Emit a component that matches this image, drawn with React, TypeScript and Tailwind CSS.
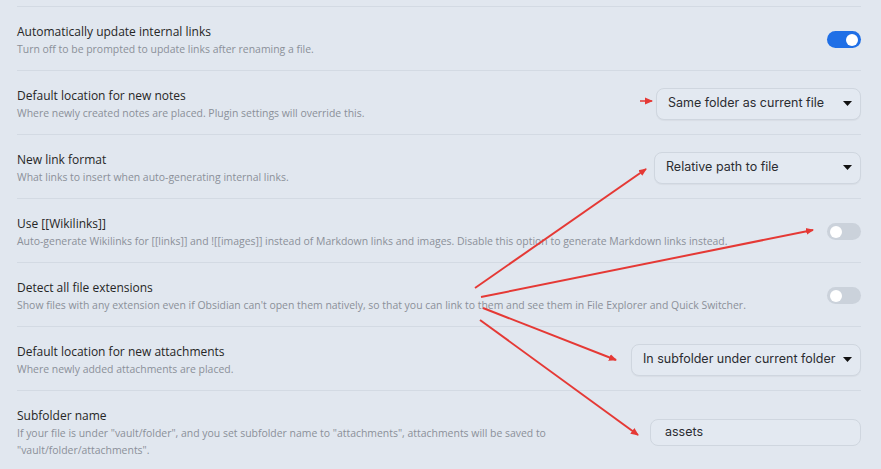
import React from "react"

type Control =
  | { kind: "toggle"; on: boolean }
  | { kind: "select"; value: string; width: string }
  | { kind: "input"; value: string; width: string }

interface Setting {
  name: string
  desc: string
  control: Control
}

const settings: Setting[] = [
  {
    name: "Automatically update internal links",
    desc: "Turn off to be prompted to update links after renaming a file.",
    control: { kind: "toggle", on: true },
  },
  {
    name: "Default location for new notes",
    desc: "Where newly created notes are placed. Plugin settings will override this.",
    control: { kind: "select", value: "Same folder as current file", width: "w-[205px]" },
  },
  {
    name: "New link format",
    desc: "What links to insert when auto-generating internal links.",
    control: { kind: "select", value: "Relative path to file", width: "w-[207px]" },
  },
  {
    name: "Use [[Wikilinks]]",
    desc: "Auto-generate Wikilinks for [[links]] and ![[images]] instead of Markdown links and images. Disable this option to generate Markdown links instead.",
    control: { kind: "toggle", on: false },
  },
  {
    name: "Detect all file extensions",
    desc: "Show files with any extension even if Obsidian can't open them natively, so that you can link to them and see them in File Explorer and Quick Switcher.",
    control: { kind: "toggle", on: false },
  },
  {
    name: "Default location for new attachments",
    desc: "Where newly added attachments are placed.",
    control: { kind: "select", value: "In subfolder under current folder", width: "w-[230px]" },
  },
  {
    name: "Subfolder name",
    desc: 'If your file is under "vault/folder", and you set subfolder name to "attachments", attachments will be saved to "vault/folder/attachments".',
    control: { kind: "input", value: "assets", width: "w-[211px]" },
  },
]

function Toggle({ on }: { on: boolean }) {
  return (
    <div
      className={`flex h-[17px] w-[34px] items-center rounded-full px-[3px] ${
        on ? "justify-end bg-[#1f6fe6]" : "justify-start bg-[#cbd2db]"
      }`}
    >
      <div className="h-[12px] w-[12px] rounded-full bg-white" />
    </div>
  )
}

function Caret() {
  return (
    <svg width="9" height="5" viewBox="0 0 9 5" className="shrink-0">
      <path d="M0 0h9L4.5 5z" fill="#111" />
    </svg>
  )
}

function ControlView({ control }: { control: Control }) {
  if (control.kind === "toggle") return <Toggle on={control.on} />
  if (control.kind === "select")
    return (
      <div
        className={`flex h-[32px] ${control.width} items-center justify-between whitespace-nowrap rounded-[8px] border border-[#cfd6df] bg-[#e3e9f1] pr-[8px] pl-[11px] text-[12.5px] text-[#2b2d31] shadow-[0_1px_1px_rgba(0,0,0,0.04)]`}
        style={{ fontFamily: "Inter, sans-serif" }}
      >
        <span>{control.value}</span>
        <Caret />
      </div>
    )
  return (
    <div
      className={`flex h-[27px] ${control.width} items-center rounded-[8px] border border-[#cfd6df] bg-[#e3e9f1] px-[14px] text-[12.5px] text-[#2b2d31]`}
      style={{ fontFamily: "Inter, sans-serif" }}
    >
      {control.value}
    </div>
  )
}

export default function App() {
  return (
    <div
      className="relative h-[469px] w-[881px] overflow-hidden bg-[#e1e7ef]"
      style={{ fontFamily: '"Open Sans", sans-serif' }}
    >
      <div className="ml-[17px] w-[844px] pt-[6px]">
        {settings.map((s) => (
          <div key={s.name} className="flex items-center gap-6 border-t border-[#d3dae3] pt-[16px] pb-[12px]">
            <div className="min-w-0 flex-1">
              <div className="text-[12px] leading-[18px] text-[#262626]">{s.name}</div>
              <div className="text-[10.45px] leading-[17px] text-[#8b9099]">{s.desc}</div>
            </div>
            <div className="shrink-0 -translate-y-[1px]">
              <ControlView control={s.control} />
            </div>
          </div>
        ))}
      </div>

      {/* annotation arrows */}
      <svg className="pointer-events-none absolute inset-0" width="881" height="469">
        <defs>
          <marker id="head" markerWidth="8" markerHeight="8" refX="7" refY="4" orient="auto" markerUnits="userSpaceOnUse">
            <path d="M0 0.5L8 4L0 7.5z" fill="#e53935" />
          </marker>
        </defs>
        <g stroke="#e53935" strokeWidth="2" fill="none" markerEnd="url(#head)">
          <line x1="640" y1="101" x2="652" y2="101" strokeWidth="1.5" />
          <line x1="475" y1="288" x2="646" y2="169" />
          <line x1="481" y1="297" x2="813" y2="230" />
          <line x1="483" y1="308" x2="616" y2="360" />
          <line x1="480" y1="320" x2="638" y2="435" />
        </g>
      </svg>
    </div>
  )
}
